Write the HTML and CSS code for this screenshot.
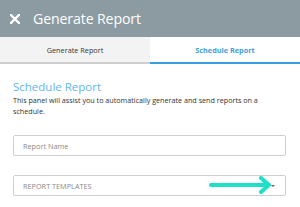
FILE: index.html
```html
<!DOCTYPE html>
<html>
<head>
<meta charset="utf-8">
<link rel="stylesheet" href="styles.css">
</head>
<body>
<div class="header">
  <svg class="close" width="10" height="10" viewBox="0 0 10 10"><path d="M1 1L9 9M9 1L1 9" stroke="#fff" stroke-width="2.4" stroke-linecap="square"/></svg>
  <span class="title">Generate Report</span>
</div>
<div class="tabs">
  <div class="tab">Generate Report</div>
  <div class="tab active">Schedule Report</div>
</div>
<div class="content">
  <h2 class="heading">Schedule Report</h2>
  <p class="desc">This panel will assist you to automatically generate and send reports on a schedule.</p>
  <div class="field">Report Name</div>
  <div class="field select">
    <span>REPORT TEMPLATES</span>
    <span class="caret"></span>
    <svg class="arrow" width="64" height="18" viewBox="0 0 64 18"><path d="M2 9H60M52 2L60 9L52 16" fill="none" stroke="#1ee0c6" stroke-width="4" stroke-linecap="round" stroke-linejoin="round"/></svg>
  </div>
</div>
</body>
</html>
```
FILE: styles.css
```css
html, body { margin: 0; padding: 0; background: #fff; }
body { font-family: "Open Sans", "Liberation Sans", sans-serif; width: 300px; height: 207px; overflow: hidden; }
.header { height: 37px; background: #8c9aa2; display: flex; align-items: center; padding-left: 10px; box-sizing: border-box; }
.title { color: #fff; font-size: 14.2px; margin-left: 13px; letter-spacing: -0.15px; }
.tabs { display: flex; height: 27px; }
.tab { flex: 1; display: flex; align-items: center; justify-content: center; font-size: 7.3px; color: #333; background: #f3f3f3; border-bottom: 2px solid #cfcfcf; box-sizing: border-box; }
.tab.active { background: #fff; color: #3d9fe0; font-weight: 700; border-bottom: 2px solid #3a9ddf; }
.content { padding: 0 14px 0 13px; }
.heading { margin: 15px 0 0; font-weight: 400; font-size: 11.5px; line-height: 16px; color: #62b6ee; }
.desc { margin: 0; max-width: 258px; font-size: 7.2px; line-height: 11px; color: #333; }
.field { position: relative; margin-top: 18px; height: 21px; border: 1px solid #cfcfcf; border-radius: 2px; box-sizing: border-box; font-size: 7.3px; color: #888; display: flex; align-items: center; padding-left: 9px; }
.field.select { margin-top: 19px; }
.caret { position: absolute; right: 10px; top: 9px; width: 0; height: 0; border-left: 2px solid transparent; border-right: 2px solid transparent; border-top: 2px solid #666; }
.arrow { position: absolute; left: 195px; top: 0px; }
```
